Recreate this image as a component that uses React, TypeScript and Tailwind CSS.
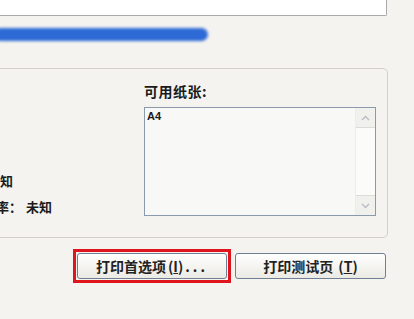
import React from "react";

const font = { fontFamily: '"Noto Sans CJK SC", "Noto Sans", sans-serif' };

export default function App() {
  return (
    <div
      className="relative w-[414px] h-[319px] overflow-hidden bg-[#f4f3ef] text-[#1a1a1a]"
      style={font}
    >
      {/* top white box (cut off) */}
      <div className="w-[387px] h-[16px] bg-white border-r border-b border-[#a9a9a9] rounded-br-[2px]" />

      {/* blurred blue bar */}
      <div className="mt-[12px] -ml-[6px] w-[214px] h-[13px] rounded-full bg-[#2d6ad6] blur-[1.5px]" />

      {/* group box */}
      <div className="mt-[27px] -ml-[4px] w-[392px] h-[170px] border border-[#d2d0c8] rounded-[5px] flex">
        <div className="w-[147px] relative">
          <div className="absolute left-[-10px] top-[104px] text-[13px] font-semibold leading-[15px] whitespace-nowrap">
            未知
          </div>
          <div className="absolute left-[-1px] top-[130px] text-[13px] font-semibold leading-[15px] whitespace-nowrap">
            率：<span className="ml-[4px]">未知</span>
          </div>
        </div>
        <div className="flex flex-col pt-[14px]">
          <div className="text-[14px] font-semibold leading-[17px] tracking-[0.5px]">可用纸张:</div>
          <div className="mt-[7px] w-[232px] h-[109px] border border-[#8b99ad] bg-[#f8f8f6] flex">
            <div className="flex-1 pl-[2px] pt-[2px] text-[11px] font-bold leading-[13px]" style={{ fontFamily: '"Liberation Sans", Arial, sans-serif' }}>
              A4
            </div>
            <div className="w-[20px] flex flex-col bg-[#f5f5f2] border-l border-[#ececea]">
              <div className="h-[20px] flex items-center justify-center border-b border-[#dcdcd6] bg-[#f0f0ec]">
                <svg width="9" height="6" viewBox="0 0 9 6">
                  <path d="M1 5 L4.5 1.5 L8 5" fill="none" stroke="#b9bcc4" strokeWidth="1.4" />
                </svg>
              </div>
              <div className="flex-1 bg-[#fbfbfa]" />
              <div className="h-[20px] flex items-center justify-center border-t border-[#dcdcd6] bg-[#f0f0ec]">
                <svg width="9" height="6" viewBox="0 0 9 6">
                  <path d="M1 1 L4.5 4.5 L8 1" fill="none" stroke="#b9bcc4" strokeWidth="1.4" />
                </svg>
              </div>
            </div>
          </div>
        </div>
      </div>

      {/* buttons */}
      <div className="mt-[11px] flex items-center">
        <div className="ml-[73px] border-[3px] border-[#e0141c] p-[1px]">
          <button className="w-[150px] h-[26px] rounded-[3px] border border-[#6f7f94] bg-gradient-to-b from-white to-[#ebeae4] text-[14px] font-semibold flex items-center justify-center text-[#222]">
            打印首选项<span className="ml-[2px]">(<span className="underline">I</span>)</span>
            <span className="ml-[2px] tracking-[3px]">...</span>
          </button>
        </div>
        <button className="ml-[4px] w-[151px] h-[26px] rounded-[3px] border border-[#6f7f94] bg-gradient-to-b from-white to-[#ebeae4] text-[14px] font-semibold flex items-center justify-center text-[#222]">
          打印测试页<span className="ml-[5px]">(<span className="underline">T</span>)</span>
        </button>
      </div>
    </div>
  );
}
